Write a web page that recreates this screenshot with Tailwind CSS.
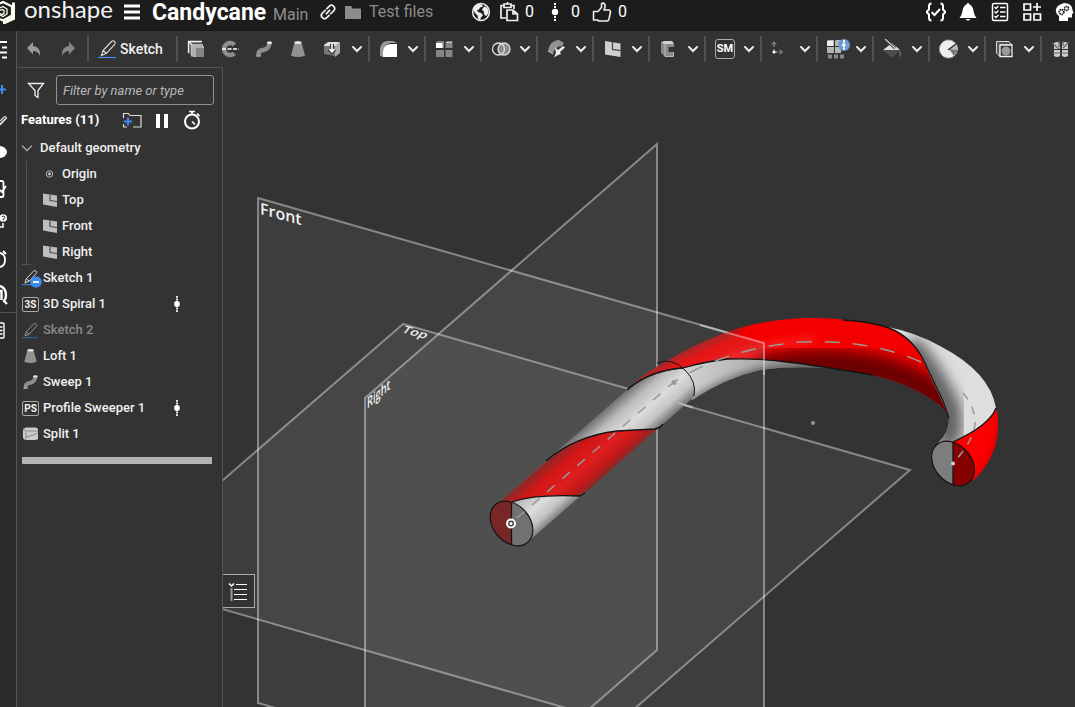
<!DOCTYPE html>
<html lang="en">
<head>
    <meta charset="UTF-8">
    <meta name="viewport" content="width=device-width, initial-scale=1.0">
    <title>Candycane</title>
    <script src="https://cdn.jsdelivr.net/npm/@tailwindcss/browser@4"></script>
</head>
<body class="bg-[#333333] text-[#f0f0f0] font-['Roboto',sans-serif] h-screen overflow-hidden flex flex-col">

    <!-- Shared icons -->
    <svg class="hidden">
        <symbol id="chevron" viewBox="0 0 16 16"><path d="M4 6l4 4 4-4" fill="none" stroke="#eee" stroke-width="2" stroke-linecap="round"/></symbol>
        <symbol id="dots" viewBox="0 0 8 20"><circle cx="4" cy="10" r="3.2" fill="#fff"/><path d="M4 1v5M4 14v6" stroke="#fff" stroke-width="2" stroke-dasharray="2 1"/></symbol>
        <symbol id="pencil" viewBox="0 0 20 20"><path d="M3.500 16.500L5 11.500 13.500 2.500q1.500-1.500 3 0t.2 2.800L8.500 14.300zM5 11.500l3.500 2.800" fill="none" stroke="#ddd" stroke-width="1.100"/><path d="M0 18.500h18" stroke="#3f8cf0" stroke-width="1.200"/></symbol>
        <symbol id="plane" viewBox="0 0 16 16"><path d="M1 1.500l14 2V15L1 12.500z" fill="#bdbdbd"/><path d="M8 2.500v6l7 1" fill="none" stroke="#4a4a4a" stroke-width="1.200"/></symbol>
        <symbol id="sweep" viewBox="0 0 18 18"><path d="M3.500 16Q3 10.500 8 10t6.500-6" fill="none" stroke="#8d8d8d" stroke-width="4.500"/><ellipse cx="14.500" cy="2.800" rx="2.700" ry="1.500" fill="#e4e4e4"/><path d="M1.300 16h4.500" stroke="#aaa" stroke-width="1.500"/></symbol>
        <symbol id="loft" viewBox="0 0 18 18"><path d="M5.500 2.500L2 15.500q7 3 14 0L12.500 2.500z" fill="#929292"/><ellipse cx="9" cy="2.500" rx="3.600" ry="1.500" fill="#e2e2e2"/></symbol>
        <symbol id="stopwatch" viewBox="0 0 20 20"><circle cx="10" cy="11.500" r="7" fill="none" stroke="#fff" stroke-width="2"/><path d="M7 1.500h6M10 1.500v3M15 3.500l2.500 2.500M10 11.500l3 3" stroke="#fff" stroke-width="1.700"/></symbol>
    </svg>

    <!-- Top bar -->
    <header class="h-[31px] shrink-0 bg-[#1c1c1c] flex items-start justify-between overflow-hidden">
        <div class="h-6 flex items-center shrink-0">
            <svg class="w-4 h-6" viewBox="0 0 16 24"><path d="M0 3.500L3 2l9 4.500v9L3 20.500 0 19" fill="none" stroke="#fffff0" stroke-width="2.200"/><path d="M15 2.500v17L3 25v-3.500l9-5v-14z" fill="#fffff0"/><path d="M0 8l3-1.500L7 9v5l-4 2.500L0 15M0 10.500l2-1 2 1v3l-2 1-2-1" fill="none" stroke="#fffff0" stroke-width="1.300"/></svg>
            <span class="ml-2 w-[100px] h-6 leading-[18px] text-[24px] text-[#f4f4f4] font-['Lato',sans-serif]">onshape</span>
            <button aria-label="Menu" class="w-4"><svg class="size-4" viewBox="0 0 16 16"><path d="M0 2h16M0 8h16M0 14h16" stroke="#fff" stroke-width="3"/></svg></button>
            <h1 class="ml-3 pt-0.5 w-[121px] text-[23px] leading-7 font-bold text-white">Candycane</h1>
            <span class="w-[46px] pt-1.5 text-[16px] leading-5 text-[#8f8f8f]">Main</span>
            <button aria-label="Copy link" class="w-[18px]"><svg class="size-[18px]" viewBox="0 0 18 18"><g fill="none" stroke="#eee" stroke-width="1.700" transform="rotate(-45 9 9)"><path d="M9 5.800H4.200a3.200 3.200 0 000 6.400H8M9 12.200h4.800a3.200 3.200 0 000-6.400H10"/><path d="M6 9h6"/></g></svg></button>
            <svg class="ml-2 w-4 h-5" viewBox="0 0 16 20"><path d="M0 4h6l1.500 2.500H16V17H0z" fill="#8c8c8c"/></svg>
            <a href="#" class="ml-2 w-[102px] text-[16px] leading-5 text-[#8c8c8c]">Test files</a>
            <button aria-label="Public document" class="w-5"><svg class="size-5" viewBox="0 0 20 20"><circle cx="10" cy="10" r="8.400" fill="none" stroke="#eee" stroke-width="1.500"/><path d="M3 5l4-3 4 .5 1 2-3 1-1 2-2 .5 1 2 3 1 2 2-2 2.500-1 3-2-2-.5-3L4 11 2 8zM13 3l4 4 .5 4-2 3-2-1-1-4-1.500-1 1-2.500 2-.5z" fill="#eee"/></svg></button>
            <button class="ml-2 w-[38px] flex items-center gap-1.5 text-[16px] leading-5 text-white"><svg class="size-5" viewBox="0 0 20 20"><path d="M7 16H2V3.500h3M12 3.500h3V7M5 2h7v3.500H5zM8.500 1.500V0M8 8h6l4.500 4v6.500H8zM14 8v4h4" fill="none" stroke="#eee" stroke-width="1.700"/></svg>0</button>
            <button class="ml-[14px] w-[31px] flex items-center gap-3 text-[16px] leading-5 text-white"><svg class="w-2 h-5" viewBox="0 0 8 20"><use href="#dots"/></svg>0</button>
            <button class="ml-[10px] flex items-center gap-1.5 text-[16px] leading-5 text-white"><svg class="size-5" viewBox="0 0 20 20"><path d="M1.500 9.500H6l3.500-4V2q0-1 1.500-1 2.500.5 2 4L12 8h5q1.500.5 1.500 2L17 17q-.5 2-2 2H7l-1.500-1h-4z" fill="none" stroke="#eee" stroke-width="1.600" stroke-linejoin="round"/></svg>0</button>
        </div>
        <nav class="h-6 flex items-center shrink-0 -mr-[5px]">
            <button aria-label="Checks" class="w-8 flex justify-center"><svg class="size-5" viewBox="0 0 20 20"><path d="M5.500 1.500Q3 1.500 3 4v3.500L.5 10 3 12.500V16q0 2.500 2.500 2.500M14.500 1.500Q17 1.500 17 4v3.500l2.500 2.500-2.500 2.500V16q0 2.500-2.500 2.500M5.500 10l3 3 5.500-6" fill="none" stroke="#fff" stroke-width="2"/></svg></button>
            <button aria-label="Notifications" class="w-8 flex justify-center"><svg class="size-5" viewBox="0 0 20 20"><path d="M10 1q1.500 0 1.500 1.500Q15 4 15.500 9q.5 4 3 7h-17q2.500-3 3-7Q5 4 8.500 2.500 8.500 1 10 1zM7.500 17h5q-2.500 3.500-5 0" fill="#fff"/></svg></button>
            <button aria-label="Tasks" class="w-8 flex justify-center"><svg class="size-5" viewBox="0 0 20 20"><rect x="2.500" y="1.500" width="15" height="17" rx="1.500" fill="none" stroke="#fff" stroke-width="1.500"/><path d="M10 5.500h5.500M10 10h5.500M10 14.500h5.500M4.500 5l1.500 1.500L8.500 4M4.500 9.500L6 11l2.500-2.500M4.500 14L6 15.500 8.500 13" stroke="#fff" stroke-width="1.300" fill="none"/></svg></button>
            <button aria-label="Apps" class="w-8 flex justify-center"><svg class="size-5" viewBox="0 0 20 20"><path d="M2 2h6.500v6H2zM2 12h6.500v6H2zM12 12h6.500v6H12zM15 1v8M11 5h8" fill="none" stroke="#fff" stroke-width="1.700"/></svg></button>
            <button aria-label="Learning" class="w-8 flex justify-center"><svg class="size-5" viewBox="0 0 20 20"><path d="M10 1q8 0 8.500 7l1 3-1.500 1v3.500h-4V19H5v-5Q1 11 2 7t8-6z" fill="#fff"/><circle cx="7.500" cy="10" r="2.300" fill="none" stroke="#1c1c1c" stroke-width="1.800" stroke-dasharray="1.400 .6"/><circle cx="12.500" cy="6.500" r="2" fill="none" stroke="#1c1c1c" stroke-width="1.600" stroke-dasharray="1.400 .5"/></svg></button>
        </nav>
    </header>

    <div class="flex-1 min-h-0 flex">

        <!-- Left rail, mostly slid off the window -->
        <aside class="w-[17px] shrink-0 bg-[#2b2b2b] border-r border-[#555] flex flex-col overflow-hidden">
            <button aria-label="Tabs" class="h-9"><svg class="w-4 h-9" viewBox="0 0 16 36"><path d="M0 11h7M2 16.500h5M0 21.500h7M2 26.500h5" stroke="#fff" stroke-width="2"/></svg></button>
            <button aria-label="Add" class="mt-[7px] h-[31px]"><svg class="w-4 h-[31px]" viewBox="0 0 16 31"><path d="M0 15.500h6M2 11v9" stroke="#3f8cf0" stroke-width="2"/></svg></button>
            <button aria-label="Edit" class="h-[31px]"><svg class="w-4 h-[31px]" viewBox="0 0 16 31"><path d="M0 16l4-4q2-1 2.500 1L0 20M0 19l5-5" fill="none" stroke="#ddd" stroke-width="1.200"/></svg></button>
            <button aria-label="Comments" class="h-8"><svg class="w-4 h-8" viewBox="0 0 16 32"><ellipse cx="-1" cy="16" rx="8" ry="6" fill="#fff"/></svg></button>
            <button aria-label="Variables" class="mt-[5px] h-8"><svg class="w-4 h-8" viewBox="0 0 16 32"><path d="M0 8h2q1.500 0 1.500 2v12q0 2-1.500 2H0M0 17l2 2 4-6" fill="none" stroke="#fff" stroke-width="1.800"/></svg></button>
            <button aria-label="Help" class="h-8"><svg class="w-4 h-8" viewBox="0 0 16 32"><path d="M0 13h1M0 22h3v-4" fill="none" stroke="#fff" stroke-width="1.500"/><circle cx="3.200" cy="13" r="3.800" fill="#fff"/><path d="M2 12q1-2 2.500-.5T3.200 14v1.500" fill="none" stroke="#2b2b2b"/></svg></button>
            <button aria-label="History" class="mt-[6px] h-8"><svg class="w-4 h-8" viewBox="0 0 16 32"><path d="M0 10q5 1 5 7t-5 7M3 8l3 3" fill="none" stroke="#fff" stroke-width="1.800"/></svg></button>
            <button aria-label="Search" class="mt-1 h-8"><svg class="w-4 h-8" viewBox="0 0 16 32"><path d="M0 7q6 2 6 9 0 4-2 6l3 3M0 12h1.500v9" fill="none" stroke="#fff" stroke-width="2.400"/></svg></button>
            <div class="border-t border-[#555] mt-px pt-px">
                <button aria-label="Properties" class="block"><svg class="w-4 h-8" viewBox="0 0 16 32"><path d="M0 9h3q1 0 1 1v13q0 1-1 1H0M0 13h2.500M0 16.500h2.500M0 20h2.500" fill="none" stroke="#fff" stroke-width="1.400"/></svg></button>
            </div>
        </aside>

        <main class="flex-1 min-w-0 flex flex-col">

            <!-- Toolbar -->
            <div class="h-9 shrink-0 flex items-center overflow-hidden text-[14px] font-medium">
                <button aria-label="Undo" class="w-[34px] shrink-0 flex justify-center"><svg class="size-4" viewBox="0 0 16 16"><path d="M7 1v4q8 1 7 10-2-5-7-5v3.500L1 7z" fill="#999"/></svg></button>
                <button aria-label="Redo" class="w-[34px] shrink-0 flex justify-center"><svg class="size-4" viewBox="0 0 16 16"><path d="M9 1v4q-8 1-7 10 2-5 7-5v3.500L15 7z" fill="#888"/></svg></button>
                <div class="ml-0.5 h-[26px] w-[89px] shrink-0 border-l-2 border-[#515151] pl-[9px]">
                    <button class="h-[26px] flex items-center gap-0.5"><svg class="size-5"><use href="#pencil"/></svg>Sketch</button>
                </div>
                <div class="h-[26px] w-48 shrink-0 border-l-2 border-[#515151] flex items-center pl-px">
                    <button aria-label="Extrude" class="w-[34px] flex justify-center"><svg class="size-[18px]" viewBox="0 0 18 18"><path d="M1.500 1.500h13v2H5v12.500l-3.500-3z" fill="#666"/><path d="M1.500 13V1.500H15M1.500 1.500L5 5" fill="none" stroke="#eee" stroke-width="1.300"/><path d="M5 16.500V5h11" fill="none" stroke="#ddd" stroke-width="1.500"/><path d="M6 6h11v11H6z" fill="#b0b0b0"/><path d="M9 8h8v9H9z" fill="#858585"/></svg></button>
                    <button aria-label="Revolve" class="w-[34px] flex justify-center"><svg class="size-[18px]" viewBox="0 0 18 18"><path d="M13.500 5a6 6 0 10-.2 8.300" fill="none" stroke="#8e8e8e" stroke-width="4.500"/><path d="M1 9h17" stroke="#fff" stroke-width="1.400" stroke-dasharray="4 1.500"/></svg></button>
                    <button aria-label="Sweep" class="w-[34px] flex justify-center"><svg class="size-[18px]"><use href="#sweep"/></svg></button>
                    <button aria-label="Loft" class="w-[34px] flex justify-center"><svg class="size-[18px]"><use href="#loft"/></svg></button>
                    <button aria-label="Thicken" class="w-[34px] flex justify-center"><svg class="size-[18px]" viewBox="0 0 18 18"><path d="M1 5l4-3h12l-4 4H1z" fill="#ddd"/><path d="M1 6h11v10L1 14z" fill="#777"/><path d="M12 6l5-4v11l-5 4z" fill="#aaa"/><path d="M9 4v8M6.500 9L9 12l2.500-3" stroke="#333" stroke-width="4" fill="none"/><path d="M9 4v8M6.500 9L9 12l2.500-3" stroke="#fff" stroke-width="1.600" fill="none"/></svg></button>
                    <button aria-label="More solid tools"><svg class="size-4"><use href="#chevron"/></svg></button>
                </div>
                <div class="h-[26px] w-14 shrink-0 border-l-2 border-[#515151] pl-[9px] flex items-center gap-1.5">
                    <button aria-label="Fillet"><svg class="block size-5" viewBox="0 0 20 20"><path d="M1 17V10Q2 2 9 2h5l4 2H11Q5 5 4.500 12v6z" fill="#999"/><path d="M4 18v-6q1-7 8-7h6v13z" fill="#fff"/></svg></button>
                    <button aria-label="Fillet tools"><svg class="size-4"><use href="#chevron"/></svg></button>
                </div>
                <div class="h-[26px] w-14 shrink-0 border-l-2 border-[#515151] pl-[9px] flex items-center gap-1.5">
                    <button aria-label="Pattern"><svg class="block size-5" viewBox="0 0 20 20"><path d="M1 3.500L2.500 2H9v7H1zM10.500 3.500L12 2h5.500v7h-7zM1 11h8v7H1zM10.500 11h7v7h-7z" fill="#858585"/><path d="M1 4h6.500v5H1z" fill="#fff"/><path d="M11 3.500h6" stroke="#ccc"/></svg></button>
                    <button aria-label="Pattern tools"><svg class="size-4"><use href="#chevron"/></svg></button>
                </div>
                <div class="h-[26px] w-14 shrink-0 border-l-2 border-[#515151] pl-[9px] flex items-center gap-1.5">
                    <button aria-label="Boolean"><svg class="block size-5" viewBox="0 0 20 20"><circle cx="13" cy="10" r="6" fill="#8a8a8a"/><circle cx="7.500" cy="10" r="6" fill="none" stroke="#ddd" stroke-width="1.300"/><circle cx="13" cy="10" r="6" fill="none" stroke="#ddd" stroke-width="1.300"/></svg></button>
                    <button aria-label="Boolean tools"><svg class="size-4"><use href="#chevron"/></svg></button>
                </div>
                <div class="h-[26px] w-14 shrink-0 border-l-2 border-[#515151] pl-[9px] flex items-center gap-1.5">
                    <button aria-label="Modify"><svg class="block size-5" viewBox="0 0 20 20"><path d="M1 12Q3 1 12 1l5 3-2 3Q8 7 6 15z" fill="#929292"/><path d="M1 12l5 3" stroke="#ccc"/><path d="M8 8l3 3 5-4 2 1.500-5 4.500 1 2-3 1-4 2.500 2-5z" fill="#eee"/></svg></button>
                    <button aria-label="Modify tools"><svg class="size-4"><use href="#chevron"/></svg></button>
                </div>
                <div class="h-[26px] w-14 shrink-0 border-l-2 border-[#515151] pl-[9px] flex items-center gap-1.5">
                    <button aria-label="Plane"><svg class="block size-5" viewBox="0 0 20 20"><path d="M2 2l15.500 2.500V18L2 15.500z" fill="#d0d0d0"/><path d="M9.500 3v7.500l8 1.200" fill="none" stroke="#4a4a4a" stroke-width="1.300"/></svg></button>
                    <button aria-label="Plane tools"><svg class="size-4"><use href="#chevron"/></svg></button>
                </div>
                <div class="h-[26px] w-14 shrink-0 border-l-2 border-[#515151] pl-[9px] flex items-center gap-1.5">
                    <button aria-label="Frame"><svg class="block size-5" viewBox="0 0 20 20"><path d="M2 3.500L5.500 2H13l2 3.500V8H9.500v5h5v4.500H6L2 14z" fill="#8a8a8a"/><path d="M2 3.500L5.500 2H13l2 3H6z" fill="#d0d0d0"/><path d="M6 5v12.500M6 17.500h8.500V13" fill="none" stroke="#bbb"/></svg></button>
                    <button aria-label="Frame tools"><svg class="size-4"><use href="#chevron"/></svg></button>
                </div>
                <div class="h-[26px] w-14 shrink-0 border-l-2 border-[#515151] pl-[9px] flex items-center gap-1.5">
                    <button aria-label="Sheet metal" class="size-5 border border-[#aaa] rounded-[3px] text-[11px] leading-4 font-bold text-white">SM</button>
                    <button aria-label="Sheet metal tools"><svg class="size-4"><use href="#chevron"/></svg></button>
                </div>
                <div class="h-[26px] w-14 shrink-0 border-l-2 border-[#515151] pl-[9px] flex items-center gap-1.5">
                    <button aria-label="Mate connector"><svg class="block size-5" viewBox="0 0 20 20"><path d="M3 4v8M3 13h6" stroke="#888" stroke-width="1.500" stroke-dasharray="4 2"/><path d="M0 5.500L3 2l3 3.500zM8.500 10l4 3-4 3z" fill="#777"/><circle cx="3" cy="13" r="1.500" fill="#fff"/></svg></button>
                    <button aria-label="Mate tools"><svg class="size-4"><use href="#chevron"/></svg></button>
                </div>
                <div class="h-[26px] w-14 shrink-0 border-l-2 border-[#515151] pl-[9px] flex items-center gap-1">
                    <button aria-label="Configured features"><svg class="block w-[22px] h-5 overflow-visible" viewBox="0 0 22 20"><path d="M0 2l1-1h6v6H0zM8 2l1-1h5v6H8zM0 8h7v6H0zM8 8h6v6H8z" fill="#b5b5b5"/><path d="M0 2h6v5H0z" fill="#eee"/><path d="M1 15.500h4v4H1zM7 15.500h4v4H7zM13 15.500h4v4h-4z" fill="#888"/><circle cx="17" cy="6" r="6" fill="#6d9bd2"/><path d="M17 1v10M15 6h4" stroke="#fff" stroke-width="2" stroke-dasharray="1.500 .5"/></svg></button>
                    <button aria-label="Configured tools"><svg class="size-4"><use href="#chevron"/></svg></button>
                </div>
                <div class="h-[26px] w-14 shrink-0 border-l-2 border-[#515151] pl-[9px] flex items-center gap-1.5">
                    <button aria-label="Appearance"><svg class="block size-5" viewBox="0 0 20 20"><path d="M0 11l9-7 8 7z" fill="#ddd"/><path d="M0 11h17l-8 8z" fill="#4d4d4d"/><path d="M16 11q4 3 2 7-3 0-2-7z" fill="#5a5a5a"/><path d="M2 0l10 9" stroke="#333" stroke-width="3"/><path d="M2 0l10 9" stroke="#ccc" stroke-width="1.300"/></svg></button>
                    <button aria-label="Appearance tools"><svg class="size-4"><use href="#chevron"/></svg></button>
                </div>
                <div class="h-[26px] w-14 shrink-0 border-l-2 border-[#515151] pl-[9px] flex items-center gap-1.5">
                    <button aria-label="Gauge"><svg class="block size-5" viewBox="0 0 20 20"><circle cx="9.500" cy="10" r="9" fill="#eee" stroke="#bbb" stroke-dasharray="2 1"/><path d="M10 10l8-4 1 5z" fill="#bbb"/><path d="M10 10l9 1-4 6z" fill="#777"/><path d="M9 11l8-6" stroke="#222" stroke-width="1.300"/></svg></button>
                    <button aria-label="Gauge tools"><svg class="size-4"><use href="#chevron"/></svg></button>
                </div>
                <div class="h-[26px] w-14 shrink-0 border-l-2 border-[#515151] pl-[9px] flex items-center gap-1.5">
                    <button aria-label="Hole"><svg class="block size-5" viewBox="0 0 20 20"><path d="M1.500 2.500H14L17 6H5v11.500L1.500 14z" fill="#555" stroke="#ddd"/><path d="M5 6h12v11.500H5z" fill="#333" stroke="#eee" stroke-width="1.300"/><circle cx="11" cy="12" r="4.500" fill="#999"/></svg></button>
                    <button aria-label="Hole tools"><svg class="size-4"><use href="#chevron"/></svg></button>
                </div>
                <div class="h-[26px] w-14 shrink-0 border-l-2 border-[#515151] pl-[9px] flex items-center gap-1.5">
                    <button aria-label="Custom feature"><svg class="block size-5" viewBox="0 0 20 20"><path d="M3 4q3-2 6 0v6H3zM11 4q3-2 6 0v6h-6zM3 11h6v6q-3 2-6 0zM11 11h6v6q-3 2-6 0z" fill="#ccc"/><path d="M1 4l7 6M8 2v6M18 3l-6 6M12 2v5M2 14h16" stroke="#666" stroke-width="1.200"/></svg></button>
                </div>
            </div>

            <div class="flex-1 min-h-0 flex">

                <!-- Feature list -->
                <section class="w-[206px] shrink-0 border-t border-r border-[#555] pt-[7px] text-[13px] font-medium">
                    <div class="h-[30px] flex items-center pl-[10px] pr-2">
                        <svg class="size-[18px] mr-[11px]" viewBox="0 0 18 18"><path d="M1.500 2.500h15L11 9.500v7l-3-2v-5z" fill="none" stroke="#eee" stroke-width="1.300"/></svg>
                        <input type="text" aria-label="Filter features" placeholder="Filter by name or type" class="min-w-0 flex-1 h-[30px] border border-[#909090] rounded-[3px] px-[6px] text-[13px] font-normal italic placeholder:text-[#b8b8b8]">
                    </div>
                    <div class="h-[30px] flex items-center pl-1">
                        <h2 class="w-[101px] text-[13px] font-bold text-white">Features (11)</h2>
                        <button aria-label="Add folder"><svg class="block size-5" viewBox="0 0 20 20"><path d="M1.500 8V3.500h5L8 5.500h11V17H11M1.500 14v3H5" fill="none" stroke="#ddd" stroke-width="1.200"/><path d="M2 11.500h8M6 7.500v8" stroke="#3f8cf0" stroke-width="2"/></svg></button>
                        <button aria-label="Pause" class="ml-2.5"><svg class="block size-5" viewBox="0 0 20 20"><path d="M6 4v14M14 4v14" stroke="#fff" stroke-width="4"/></svg></button>
                        <button aria-label="Regeneration times" class="ml-2.5"><svg class="block size-5"><use href="#stopwatch"/></svg></button>
                    </div>
                    <button class="h-[26px] flex items-center pl-1"><svg class="w-3 h-3 mr-[7px]" viewBox="0 0 12 12"><path d="M1 3.500l5 5 5-5" fill="none" stroke="#999" stroke-width="1.700"/></svg>Default geometry</button>
                    <ul class="relative pl-[25px] before:absolute before:left-[9px] before:top-0 before:bottom-0 before:border-l before:border-[#555] after:absolute after:left-[5px] after:bottom-0 after:w-[9px] after:border-b after:border-[#555]">
                        <li><button class="h-[26px] flex items-center gap-1"><svg class="size-4" viewBox="0 0 16 16"><circle cx="7.500" cy="8" r="3.200" fill="none" stroke="#bbb"/><circle cx="7.500" cy="8" r="1.400" fill="#ccc"/></svg>Origin</button></li>
                        <li><button class="h-[26px] flex items-center gap-1"><svg class="size-4"><use href="#plane"/></svg>Top</button></li>
                        <li><button class="h-[26px] flex items-center gap-1"><svg class="size-4"><use href="#plane"/></svg>Front</button></li>
                        <li><button class="h-[26px] flex items-center gap-1"><svg class="size-4"><use href="#plane"/></svg>Right</button></li>
                    </ul>
                    <ul class="pl-[5px]">
                        <li><button class="h-[26px] flex items-center gap-1"><svg class="w-[17px] h-5 overflow-visible" viewBox="0 0 17 20"><use href="#pencil" width="17" height="17" y="1"/><circle cx="14" cy="14" r="5.800" fill="#3b8df2"/><path d="M11 14h6" stroke="#fff" stroke-width="1.800"/></svg>Sketch 1</button></li>
                        <li class="flex items-center"><button class="h-[26px] w-[151px] flex items-center gap-1"><span class="w-[17px] h-[15px] border border-[#aaa] rounded-[2px] text-[10px] leading-[13px] font-bold">3S</span>3D Spiral 1</button><svg class="w-2 h-[18px]"><use href="#dots"/></svg></li>
                        <li><button class="h-[26px] flex items-center gap-1 text-[#8a8a8a]"><svg class="w-[17px] h-[17px] opacity-60"><use href="#pencil"/></svg>Sketch 2</button></li>
                        <li><button class="h-[26px] flex items-center gap-1"><svg class="w-[17px] h-4"><use href="#loft"/></svg>Loft 1</button></li>
                        <li><button class="h-[26px] flex items-center gap-1"><svg class="w-[17px] h-4"><use href="#sweep"/></svg>Sweep 1</button></li>
                        <li class="flex items-center"><button class="h-[26px] w-[151px] flex items-center gap-1 whitespace-nowrap"><span class="w-[17px] h-[15px] border border-[#aaa] rounded-[2px] text-[10px] leading-[13px] font-bold">PS</span>Profile Sweeper 1</button><svg class="w-2 h-[18px]"><use href="#dots"/></svg></li>
                        <li><button class="h-[26px] flex items-center gap-1"><svg class="w-[17px] h-4" viewBox="0 0 17 16"><path d="M1 3l3-1.500h10L16 3v10l-2 1H3l-2-2z" fill="#ccc"/><path d="M1 3l3 2h12M4 5v9M4 11q6-1 12-4" stroke="#888" fill="none"/></svg>Split 1</button></li>
                    </ul>
                    <div class="mt-2.5 ml-[5px] mr-2.5 h-[7px] bg-[#b4b2b4]"></div>
                </section>

                <!-- 3D view -->
                <section class="relative flex-1 min-w-0 overflow-hidden">
                    <svg class="absolute inset-0 w-full h-full" viewBox="223 67 852 640" preserveAspectRatio="xMinYMin slice">
                        <defs>
                            <linearGradient id="tubeWhite" gradientUnits="userSpaceOnUse" x1="569" y1="442" x2="601" y2="478">
                                <stop offset="0" stop-color="#747474"/><stop offset=".25" stop-color="#bcbcbc"/><stop offset=".55" stop-color="#dcdcdc"/><stop offset=".8" stop-color="#c4c4c4"/><stop offset="1" stop-color="#7c7c7c"/>
                            </linearGradient>
                            <linearGradient id="tubeRed" gradientUnits="userSpaceOnUse" x1="569" y1="442" x2="601" y2="478">
                                <stop offset="0" stop-color="#8a2a2a"/><stop offset=".25" stop-color="#d31515"/><stop offset=".6" stop-color="#df1e1e"/><stop offset=".85" stop-color="#c01818"/><stop offset="1" stop-color="#8a2828"/>
                            </linearGradient>
                            <linearGradient id="innerWhite" gradientUnits="userSpaceOnUse" x1="690" y1="370" x2="850" y2="370">
                                <stop offset="0" stop-color="#d0d0d0"/><stop offset=".5" stop-color="#a8a8a8"/><stop offset="1" stop-color="#666"/>
                            </linearGradient>
                            <filter id="soft" x="-30%" y="-30%" width="160%" height="160%"><feGaussianBlur stdDeviation="7"/></filter>
                            <filter id="softer" x="-30%" y="-30%" width="160%" height="160%"><feGaussianBlur stdDeviation="4"/></filter>
                            <path id="archRed" d="M627 390Q640 377 657 367Q700 340 740 328Q775 318 812 318Q850 318 883 326Q908 333 922 357Q932 378 943 401L949 418Q946 408 933 400Q908 383 873 375Q820 366 787 362Q757 358 727 359Q703 362 683 368Q650 370 627 390z"/>
                            <path id="archWhite" d="M883 326Q915 332 940 346Q990 372 996 408Q990 425 953 442L938 443Q950 432 949 418Q942 400 932 380L922 357Q908 333 883 326z"/>
                            <path id="tailRed" d="M996 408Q1001 425 995 447Q989 466 973 481L953 442Q990 425 996 408z"/>
                            <path id="innerTube" d="M683 368Q703 362 727 359Q757 358 787 362L860 371Q800 364 760 370Q725 378 692 400z"/>
                            <clipPath id="clipRed"><use href="#archRed"/></clipPath>
                            <clipPath id="clipWhite"><use href="#archWhite"/></clipPath>
                            <clipPath id="clipTail"><use href="#tailRed"/></clipPath>
                            <clipPath id="clipInner"><use href="#innerTube"/></clipPath>
                            <clipPath id="capStart"><ellipse cx="511.500" cy="523.500" rx="24.800" ry="18.300" transform="rotate(49 511.500 523.500)"/></clipPath>
                            <clipPath id="capEnd"><ellipse cx="953" cy="463.500" rx="24.800" ry="18.300" transform="rotate(49 953 463.500)"/></clipPath>
                        </defs>

                        <!-- Planes -->
                        <g fill="#fff" fill-opacity=".05" stroke="#fff" stroke-opacity=".4" stroke-width="2">
                            <path d="M258 198L764 343V848L258 703z"/>
                            <path d="M403 324L910 470L618 723L111 577z"/>
                            <path d="M365 398L657 144V650L365 904z"/>
                        </g>

                        <!-- Curved part of the cane -->
                        <use href="#innerTube" fill="url(#innerWhite)"/>
                        <g clip-path="url(#clipInner)"><path d="M860 374Q800 366 760 373Q725 382 692 404" fill="none" stroke="#555" stroke-width="9" filter="url(#softer)"/></g>
                        <use href="#archRed" fill="#f40000"/>
                        <g clip-path="url(#clipRed)">
                            <path d="M700 372Q760 342 815 340" fill="none" stroke="#ff3030" stroke-width="7" stroke-opacity=".6" filter="url(#softer)"/>
                            <path d="M760 370Q830 358 880 371T955 416" fill="none" stroke="#6c0000" stroke-width="30" filter="url(#soft)"/>
                            <path d="M627 386Q680 347 740 327" fill="none" stroke="#8a1c1c" stroke-width="8" filter="url(#softer)"/>
                            <path d="M600 299L764 343V420H600z" fill="#999" fill-opacity=".15"/>
                        </g>
                        <use href="#archWhite" fill="#dedede"/>
                        <g clip-path="url(#clipWhite)"><path d="M908 344Q932 372 947 404Q955 425 944 446" fill="none" stroke="#606060" stroke-width="24" filter="url(#soft)"/></g>
                        <use href="#tailRed" fill="#fb0000"/>
                        <g clip-path="url(#clipTail)"><path d="M1003 420Q1003 455 978 486" fill="none" stroke="#a00000" stroke-width="6" filter="url(#softer)"/></g>

                        <!-- Straight part -->
                        <path d="M498 503L628 389Q645 374 683 368Q697 380 694 397L662 425L530 540z" fill="url(#tubeWhite)"/>
                        <path d="M498 503L543 464Q575 436 617 431L655 429Q660 428 663 424L585 493L580 496Q535 494 512 502z" fill="url(#tubeRed)"/>

                        <!-- Edges -->
                        <g fill="none" stroke="#141414" stroke-width="1.300">
                            <path d="M512 502Q535 494 580 496L585 493"/>
                            <path d="M546 461Q575 436 617 431L655 429Q660 428 663 424"/>
                            <path d="M627 390Q650 370 683 368Q703 362 727 359Q757 358 787 362Q820 366 873 375"/>
                            <path d="M843 320Q865 321 883 326Q908 333 922 357Q932 378 943 401L949 418"/>
                            <path d="M996 408Q990 425 953 442"/>
                            <path d="M657 363Q672 357 685 370Q697 382 694 396" stroke-width="1"/>
                        </g>

                        <!-- End caps -->
                        <g clip-path="url(#capStart)"><path d="M485 495h27v55h-27z" fill="#782626"/><path d="M512 495h27v55h-27z" fill="#717171"/><path d="M511.500 500v50" stroke="#141414" stroke-width="1.300"/></g>
                        <g clip-path="url(#capEnd)"><path d="M925 435h28v55h-28z" fill="#7d7d7d"/><path d="M953 435h28v55h-28z" fill="#850000"/><path d="M953 440v50" stroke="#141414" stroke-width="1.300"/></g>
                        <g fill="none" stroke="#141414" stroke-width="1.200">
                            <ellipse cx="511.500" cy="523.500" rx="24.800" ry="18.300" transform="rotate(49 511.500 523.500)"/>
                            <ellipse cx="953" cy="463.500" rx="24.800" ry="18.300" transform="rotate(49 953 463.500)"/>
                        </g>

                        <!-- Sweep path -->
                        <g fill="none" stroke="#999" stroke-width="1.500">
                            <path d="M517 518L674 382" stroke-dasharray="10 10"/>
                            <path d="M674 382Q725 349 800 342Q870 339 921 362" stroke-dasharray="15 13" stroke-dashoffset="10"/>
                            <path d="M963 393Q976 408 975 425Q972 443 953 463" stroke-dasharray="8 8"/>
                        </g>
                        <g fill="#999"><circle cx="674" cy="382.500" r="2.500"/><circle cx="813" cy="423" r="2"/></g>
                        <circle cx="953" cy="463.500" r="2" fill="#ccc"/>
                        <circle cx="511" cy="523.500" r="4" fill="#444" stroke="#fff" stroke-width="2"/>
                        <circle cx="511" cy="523.500" r="1.500" fill="#fff"/>

                        <!-- Plane edges that pass in front of the cane -->
                        <path d="M700 325L764 343V375" fill="none" stroke="#fff" stroke-opacity=".4" stroke-width="2"/>
                        <path d="M678 403L693 407.500" stroke="#b5b5b5" stroke-width="2"/>

                        <g fill="#f0f0f0" font-family="Open Sans, sans-serif" font-weight="600">
                            <text font-size="16" transform="translate(260 214) skewY(15)">Front</text>
                            <text font-size="14" transform="matrix(.96 .28 -.5 .64 401 332)">Top</text>
                            <text font-size="15" transform="matrix(.62 -.54 0 1 367 409)">Right</text>
                        </g>
                    </svg>

                    <!-- Panel toggle -->
                    <button aria-label="Show feature list" class="absolute -left-px top-[507px] w-[33px] h-[34px] bg-[#333333] border border-l-0 border-[#aaa] flex items-center justify-center">
                        <svg class="size-5" viewBox="0 0 20 20"><path d="M8 3.500h11M6 8.500h13M6 13.500h13M6 18.500h13" stroke="#fff" stroke-width="1.200"/><path d="M1 2.500l2.500 2.500L6 2.500" fill="none" stroke="#fff" stroke-width="1.500"/><path d="M3.500 7v13" stroke="#999" stroke-width="2"/></svg>
                    </button>
                </section>
            </div>
        </main>
    </div>
</body>
</html>
